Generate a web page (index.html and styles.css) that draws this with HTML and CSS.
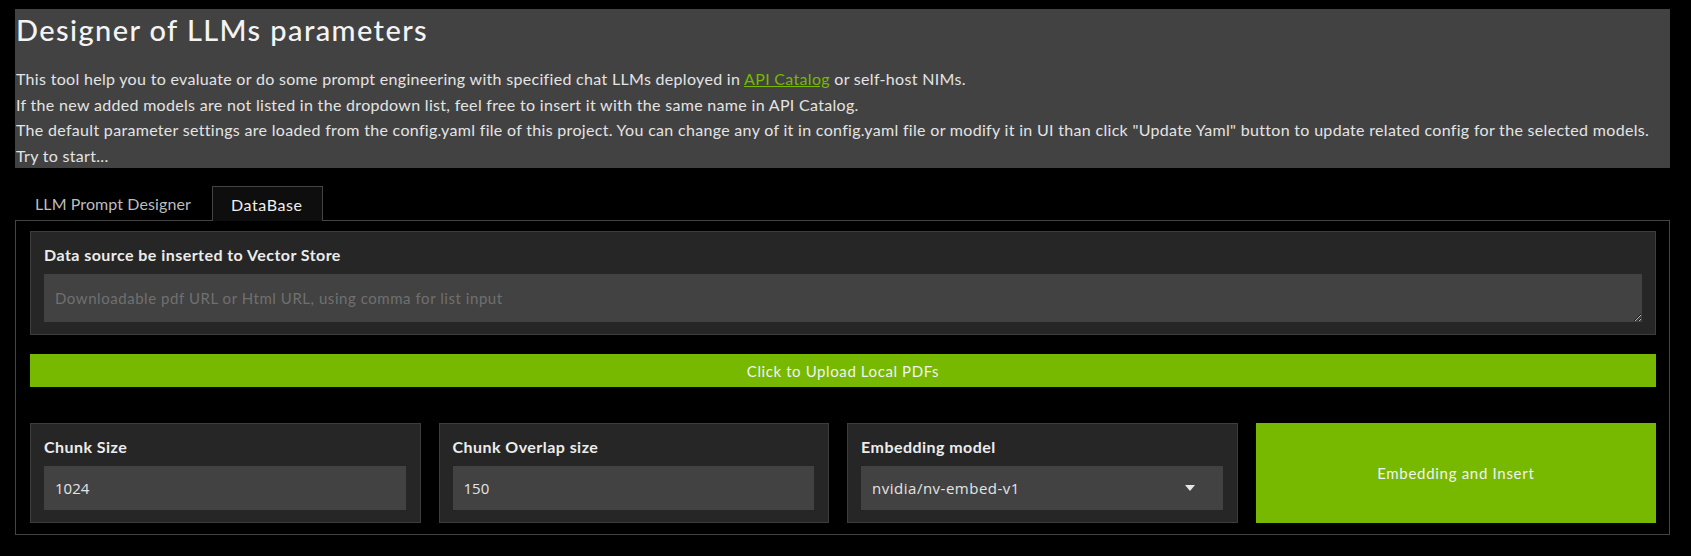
FILE: index.html
```html
<!DOCTYPE html>
<html lang="en">
<head>
<meta charset="utf-8">
<title>Designer of LLMs parameters</title>
<link rel="stylesheet" href="styles.css">
</head>
<body>
<div class="app">
  <div class="intro">
    <h1>Designer of LLMs parameters</h1>
    <p>This tool help you to evaluate or do some prompt engineering with specified chat LLMs deployed in <a href="#">API Catalog</a> or self-host NIMs.<br>
    If the new added models are not listed in the dropdown list, feel free to insert it with the same name in API Catalog.<br>
    The default parameter settings are loaded from the config.yaml file of this project. You can change any of it in config.yaml file or modify it in UI than click "Update Yaml" button to update related config for the selected models.<br>
    Try to start...</p>
  </div>

  <div class="tabs">
    <div class="tab">LLM Prompt Designer</div>
    <div class="tab active">DataBase</div>
  </div>

  <div class="panel">
    <div class="block source">
      <label class="label">Data source be inserted to Vector Store</label>
      <textarea class="textarea" placeholder="Downloadable pdf URL or Html URL, using comma for list input"></textarea>
    </div>

    <button class="upload">Click to Upload Local PDFs</button>

    <div class="row">
      <div class="block field">
        <label class="label">Chunk Size</label>
        <div class="input">1024</div>
      </div>
      <div class="block field">
        <label class="label">Chunk Overlap size</label>
        <div class="input">150</div>
      </div>
      <div class="block field">
        <label class="label">Embedding model</label>
        <div class="input select">
          <span>nvidia/nv-embed-v1</span>
          <svg class="caret" width="10" height="6" viewBox="0 0 10 6"><path d="M0 0 H10 L5 6 Z" fill="#e6e6e6"/></svg>
        </div>
      </div>
      <button class="embed">Embedding and Insert</button>
    </div>
  </div>
</div>
</body>
</html>
```

FILE: styles.css
```css
* { box-sizing: border-box; }

body {
  margin: 0;
  background: #000;
  font-family: "Lato", "Noto Sans", sans-serif;
  color: #e6e6e6;
}

.app {
  padding: 9px 21px 0 15px;
}

.intro {
  background: #424242;
  padding: 4px 2px 0 1px;
}

.intro h1 {
  margin: 0;
  font-size: 29px;
  line-height: 34px;
  font-weight: 500;
  letter-spacing: 1.4px;
  color: #f4f4f4;
}

.intro p {
  margin: 19px 0 0;
  font-size: 16px;
  line-height: 25.6px;
  letter-spacing: 0.31px;
  color: #e4e4e4;
}

.intro a {
  color: #76b900;
  text-decoration: underline;
}

.tabs {
  display: flex;
  margin-top: 18px;
  gap: 2px;
}

.tab {
  height: 34px;
  padding: 0 18px 0 19px;
  display: flex;
  align-items: center;
  font-size: 16px;
  letter-spacing: 0.1px;
  color: #bdbdbd;
  border: 1px solid transparent;
  border-bottom: none;
}

.tab.active {
  background: #0e0e0e;
  color: #f0f0f0;
  border-color: #444;
  position: relative;
  margin-bottom: -1px;
  height: 35px;
  padding: 0 19px 0 18px;
  letter-spacing: 0.6px;
  z-index: 1;
}

.panel {
  border: 1px solid #444;
  padding: 10px 13px 11px 14px;
}

.block {
  background: #262626;
  border: 1px solid #3d3d3d;
  display: flex;
  flex-direction: column;
}

.label {
  font-size: 16px;
  line-height: 20px;
  font-weight: 700;
  letter-spacing: 0.45px;
  color: #ececec;
}

.source {
  padding: 13px 13px 12px;
}

.textarea {
  margin-top: 9px;
  height: 48px;
  background: #424242;
  border: none;
  outline: none;
  color: #ddd;
  font-family: "Lato", "Noto Sans", sans-serif;
  font-size: 15px;
  letter-spacing: 0.55px;
  padding: 15px 11px 0;
  resize: vertical;
  color-scheme: dark;
}

.textarea::placeholder {
  color: #707070;
}

.upload {
  display: block;
  width: 100%;
  margin-top: 19px;
  height: 33px;
  border: none;
  background: #76b900;
  color: #f2f2f2;
  font-family: "Lato", "Noto Sans", sans-serif;
  font-size: 15px;
  letter-spacing: 0.6px;
}

.row {
  margin-top: 36px;
  display: grid;
  grid-template-columns: 1fr 1fr 1fr 1.025fr;
  gap: 18px;
  height: 100px;
}

.field {
  padding: 13px 14px 12px 13px;
}

.input {
  margin-top: 9px;
  height: 44px;
  background: #424242;
  display: flex;
  align-items: center;
  padding: 0 11px;
  font-family: "Open Sans", "Noto Sans", sans-serif;
  font-size: 15px;
  color: #e4e4e4;
}

.select {
  justify-content: space-between;
  letter-spacing: 0.5px;
}

.caret {
  margin-right: 17px;
}

.embed {
  border: none;
  background: #76b900;
  color: #f2f2f2;
  font-family: "Lato", "Noto Sans", sans-serif;
  font-size: 15px;
  letter-spacing: 0.7px;
}
```
